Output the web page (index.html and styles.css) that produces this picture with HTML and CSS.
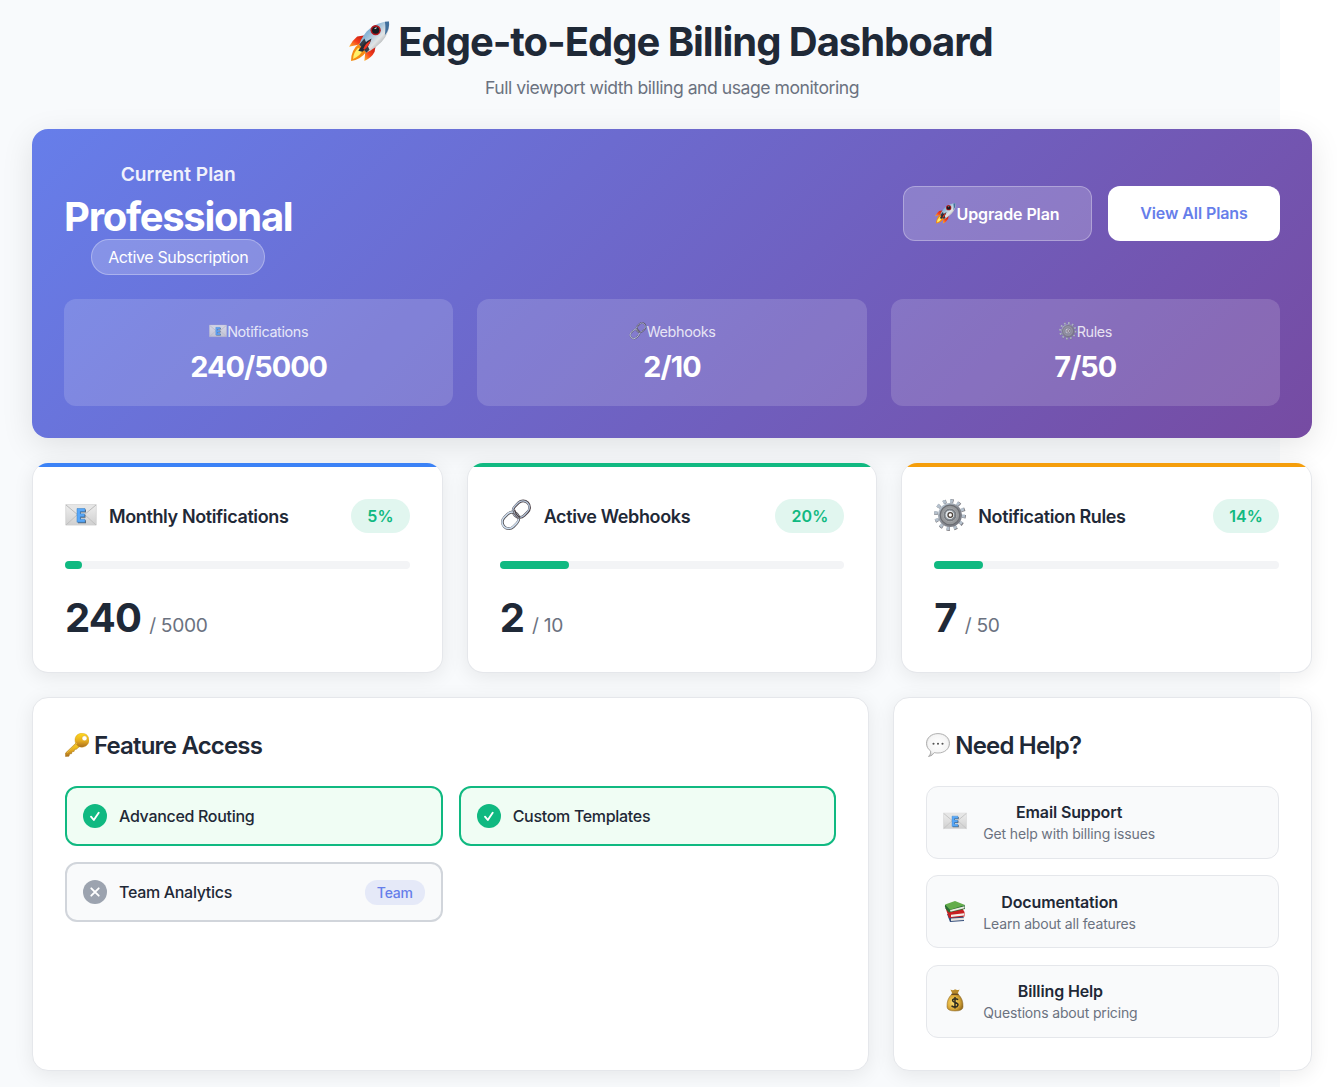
FILE: index.html
```html
<!DOCTYPE html>
<html lang="en">
<head>
<meta charset="utf-8">
<title>Edge-to-Edge Billing Dashboard</title>
<link rel="stylesheet" href="styles.css">
</head>
<body>
<svg class="sprite" aria-hidden="true">
  <defs>
    <linearGradient id="steel" x1="0" y1="0" x2="1" y2="1"><stop offset="0" stop-color="#4c88bd"/><stop offset=".35" stop-color="#8fb9d8"/><stop offset=".6" stop-color="#e2e4e5"/><stop offset="1" stop-color="#55585c"/></linearGradient>
    <linearGradient id="fin" x1="0" y1="1" x2="1" y2="0"><stop offset="0" stop-color="#ffb52b"/><stop offset=".45" stop-color="#f5401c"/><stop offset="1" stop-color="#bd1210"/></linearGradient>
    <linearGradient id="paper" x1="0" y1="0" x2="0" y2="1"><stop offset="0" stop-color="#eeeeee"/><stop offset="1" stop-color="#d0d0d0"/></linearGradient>
    <linearGradient id="metal" x1="0" y1="0" x2="1" y2="1"><stop offset="0" stop-color="#c5d4e2"/><stop offset=".5" stop-color="#888c94"/><stop offset="1" stop-color="#70717a"/></linearGradient>
    <linearGradient id="gold" x1="0" y1="0" x2="0" y2="1"><stop offset="0" stop-color="#ffd91f"/><stop offset=".55" stop-color="#e5ac20"/><stop offset="1" stop-color="#a96d20"/></linearGradient>
    <radialGradient id="bubble" cx=".5" cy=".45" r=".6"><stop offset="0" stop-color="#ffffff"/><stop offset=".7" stop-color="#f5f5f5"/><stop offset="1" stop-color="#bdbdbd"/></radialGradient>
    <radialGradient id="sack" cx=".4" cy=".5" r=".65"><stop offset="0" stop-color="#ffe173"/><stop offset=".6" stop-color="#dba938"/><stop offset="1" stop-color="#8c641b"/></radialGradient>
  </defs>
  <symbol id="rocket" viewBox="0 0 40 40">
    <path d="M16 14 8 15Q3 19 0 25l10-2 5-4z" fill="url(#fin)"/>
    <path d="M26 24l-1 6Q22 36 15 39l1-10 5-5z" fill="url(#fin)"/>
    <path d="M10 22Q2 28 2 39q9-1 15-9l-4-6z" fill="#f48c13"/>
    <path d="M9 26Q4 31 4 37q7-3 9-8z" fill="#fff06a"/>
    <path d="M10 23C14 10 25 1 39 .5 41 14 29 25 17 31z" fill="url(#steel)"/>
    <path d="M35 .8 39 .5Q40 8 35 14q1-8 0-13.200z" fill="#42709d"/>
    <path d="M15 17 10 23l7 8 3-3z" fill="#353c45"/>
    <path d="M9 29Q14 21 22 17q-2 8-9 13z" fill="#262932"/>
    <path d="M14 27Q16 22 21 19q-1 5-6 9z" fill="#f13420"/>
    <circle cx="26" cy="9" r="5" fill="#b3181e"/><circle cx="26" cy="9" r="3.500" fill="#151b21"/><path d="M25 7.500l2-1" stroke="#dce7ed" stroke-width="1"/>
  </symbol>
  <symbol id="email" viewBox="0 0 32 32">
    <path d="M.7 5.500h30.600v20.600H.7z" fill="url(#paper)" stroke="#cdcdcd" stroke-width=".6"/>
    <path d="M1 6l12 10Q16 18 19 16L31 6" fill="#e6e6e6" stroke="#b6b6b6" stroke-width=".9"/>
    <path d="M1 26l12-11M31 26 19 15" stroke="#bdbdbd" stroke-width=".9"/>
    <path d="M13 10.500h8v3h-5v2.300h4.500v3H16v2.400h5v3h-8z" fill="#5b6775"/>
    <path d="M12 9.500h8v3h-4.700v2.300h4.200v3h-4.200v2.400H20v3h-8z" fill="#58a8fa" stroke="#377dbd" stroke-width=".5"/>
  </symbol>
  <symbol id="link" viewBox="0 0 32 32">
    <g fill="none"><g transform="rotate(-45 21 10.500)"><rect x="12.500" y="4" width="18" height="13" rx="6.500" stroke="#4d4247" stroke-width="2.600"/><rect x="12.300" y="3.700" width="18" height="13" rx="6.500" stroke="#b4c5d9" stroke-width="1.300"/></g>
    <g transform="rotate(-45 11 21)"><rect x="1.500" y="14.500" width="18" height="13" rx="6.500" stroke="#555357" stroke-width="2.600"/><rect x="1.300" y="14.200" width="18" height="13" rx="6.500" stroke="#cfdeef" stroke-width="1.500"/></g>
    <path d="M14 11q1 5 5 8" stroke="#4d4247" stroke-width="2.600"/><path d="M13.500 11q1 5 5 8" stroke="#a9b4c1" stroke-width="1"/></g>
  </symbol>
  <symbol id="gear" viewBox="0 0 32 32">
    <circle cx="16" cy="16" r="14" fill="none" stroke="#77757a" stroke-width="3.800" stroke-dasharray="3.200 4.130"/>
    <circle cx="15.600" cy="15.600" r="13.700" fill="none" stroke="#b5c1cd" stroke-width="3.500" stroke-dasharray="3 4.173"/>
    <circle cx="16" cy="16" r="12" fill="url(#metal)"/><circle cx="16" cy="16" r="9.800" fill="#96989b" stroke="#6a6c71" stroke-width="1.200"/>
    <circle cx="16" cy="16" r="6.800" fill="#777a7f" stroke="#a4a7aa"/><circle cx="15.800" cy="15.800" r="4.800" fill="#e3e8ec" stroke="#7d868d"/><circle cx="16.300" cy="16" r="2.300" fill="#fff" stroke="#4a4039" stroke-width="1.300"/>
  </symbol>
  <symbol id="key" viewBox="0 0 24 24">
    <path d="M11.500 9.500.5 20v3.500l3.500-.3.600-2.200 2-.3.500-2 2-.3.600-2 1.700-.2 3.500-3z" fill="url(#gold)" stroke="#a97717" stroke-width=".5"/>
    <path fill-rule="evenodd" d="M17 .3C22 .3 24 4 24 7.500S21 14 17 14.200 10 11 10 7 13 .3 17 .3zm2.500 2.500a2.500 2.500 0 1 0 0 5 2.500 2.500 0 0 0 0-5z" fill="url(#gold)" stroke="#d29a12" stroke-width=".4"/><path d="M12 10 2 20" stroke="#e6b63b" stroke-width="1"/>
  </symbol>
  <symbol id="speech" viewBox="0 0 24 24">
    <path d="M12 .6C18.500.6 23.500 4.700 23.500 10.300S18.500 20 12 20q-2 0-3.800-.4Q6.500 23 2.500 23.600 5 21.500 4.700 18 .5 15.200.5 10.300C.5 4.700 5.500.6 12 .6z" fill="url(#bubble)" stroke="#a9a9a9" stroke-width=".9"/>
    <g fill="#555"><circle cx="7.500" cy="10.800" r="1.050"/><circle cx="12" cy="10.800" r="1.050"/><circle cx="16.500" cy="10.800" r="1.050"/></g>
  </symbol>
  <symbol id="books" viewBox="0 0 24 24">
    <path d="M4 15l3 8 14-1v-3L19 15z" fill="#334d7b"/><path d="M8 19.600l13-.8v2.300l-13 1z" fill="#e7e4df"/>
    <path d="M2.500 9 6 19l15.500-1.500V13L19 9z" fill="#c91f20"/><path d="M8 15.800l13-1.500v2.300L8 18z" fill="#f3eee7"/>
    <path d="M2 6Q1 9 6 13.500L22 10V6.200z" fill="#286c34"/><path d="M7 11 21.500 7.200v2L7.500 12.700z" fill="#eeeae2"/><path d="M2 5.500 12 2l10 4L7 10.800z" fill="#64ad4b"/>
  </symbol>
  <symbol id="money" viewBox="0 0 24 24">
    <path d="M7.500 1.500Q10 3 12 1.300q2 1.500 4.500.2L14.500 6h-5z" fill="#b98a2c"/>
    <path d="M9 6Q3.500 11 4 19q.3 4 8 4t8-4Q20.500 11 15 6z" fill="url(#sack)" stroke="#8b6420" stroke-width=".5"/><path d="M8.500 6.300h7" stroke="#68491f" stroke-width="1.300"/>
    <path d="M15.200 11.700Q12 9.700 9.800 11.500C8.300 15 15.500 14 15 17c-.8 3-4.800 2.500-6.500.8M12 9v11.500" fill="none" stroke="#302d20" stroke-width="1.500"/>
  </symbol>
</svg>
<div class="page">
 <main class="dashboard">
  <header class="heading">
    <h1 class="heading-title"><svg class="icon"><use href="#rocket"/></svg><span>Edge-to-Edge Billing Dashboard</span></h1>
    <p class="heading-sub">Full viewport width billing and usage monitoring</p>
  </header>
  <section class="plan">
    <div class="plan-top">
      <div class="plan-info"><h2 class="plan-label">Current Plan</h2><div class="plan-name">Professional</div><span class="plan-status">Active Subscription</span></div>
      <div class="plan-actions"><button class="btn btn-glass"><svg class="icon"><use href="#rocket"/></svg><span>Upgrade Plan</span></button><button class="btn btn-white">View All Plans</button></div>
    </div>
    <div class="stats">
      <div class="stat"><div class="stat-label"><svg class="icon"><use href="#email"/></svg><span>Notifications</span></div><div class="stat-value">240/5000</div></div>
      <div class="stat"><div class="stat-label"><svg class="icon"><use href="#link"/></svg><span>Webhooks</span></div><div class="stat-value">2/10</div></div>
      <div class="stat"><div class="stat-label"><svg class="icon"><use href="#gear"/></svg><span>Rules</span></div><div class="stat-value">7/50</div></div>
    </div>
  </section>
  <section class="usage">
    <article class="card usage-card blue">
      <div class="usage-head"><svg class="icon"><use href="#email"/></svg><h3 class="usage-title">Monthly Notifications</h3><span class="percent">5%</span></div>
      <div class="track"><div class="fill" style="width:4.8%"></div></div>
      <div class="amount"><strong class="amount-used">240</strong><span class="amount-max">/ 5000</span></div>
    </article>
    <article class="card usage-card green">
      <div class="usage-head"><svg class="icon"><use href="#link"/></svg><h3 class="usage-title">Active Webhooks</h3><span class="percent">20%</span></div>
      <div class="track"><div class="fill" style="width:20%"></div></div>
      <div class="amount"><strong class="amount-used">2</strong><span class="amount-max">/ 10</span></div>
    </article>
    <article class="card usage-card amber">
      <div class="usage-head"><svg class="icon"><use href="#gear"/></svg><h3 class="usage-title">Notification Rules</h3><span class="percent">14%</span></div>
      <div class="track"><div class="fill" style="width:14%"></div></div>
      <div class="amount"><strong class="amount-used">7</strong><span class="amount-max">/ 50</span></div>
    </article>
  </section>
  <section class="lower">
    <article class="card panel">
      <h2 class="panel-title"><svg class="icon"><use href="#key"/></svg><span>Feature Access</span></h2>
      <div class="features">
        <div class="feature on"><span class="mark"><svg viewBox="0 0 24 24"><path d="M8 12.700l2.800 3.300L15.700 8.700"/></svg></span><span class="feature-name">Advanced Routing</span></div>
        <div class="feature on"><span class="mark"><svg viewBox="0 0 24 24"><path d="M8 12.700l2.800 3.300L15.700 8.700"/></svg></span><span class="feature-name">Custom Templates</span></div>
        <div class="feature"><span class="mark"><svg viewBox="0 0 24 24"><path d="M8.300 8.300l7.400 7.400M15.700 8.300l-7.400 7.400"/></svg></span><span class="feature-name">Team Analytics</span><span class="tier">Team</span></div>
      </div>
    </article>
    <article class="card panel">
      <h2 class="panel-title"><svg class="icon"><use href="#speech"/></svg><span>Need Help?</span></h2>
      <div class="help">
        <div class="help-item"><svg class="icon"><use href="#email"/></svg><div class="help-text"><div class="help-name">Email Support</div><div class="help-note">Get help with billing issues</div></div></div>
        <div class="help-item"><svg class="icon"><use href="#books"/></svg><div class="help-text"><div class="help-name">Documentation</div><div class="help-note">Learn about all features</div></div></div>
        <div class="help-item"><svg class="icon"><use href="#money"/></svg><div class="help-text"><div class="help-name">Billing Help</div><div class="help-note">Questions about pricing</div></div></div>
      </div>
    </article>
  </section>
 </main>
</div>
</body>
</html>
```

FILE: styles.css
```css
* { box-sizing: border-box; margin: 0; padding: 0; }
html { background: #fff; }
body { font-family: Inter, "Liberation Sans", sans-serif; color: #1f2937; overflow: hidden; }
.sprite { position: absolute; width: 0; height: 0; }
.icon { display: block; flex: none; width: 24px; height: 24px; }
.page { width: 1280px; height: 1087px; padding-left: 32px; background: #f8fafc; }
.dashboard { width: 1280px; padding-top: 15px; }

.heading { height: 114px; text-align: center; }
.heading-title { display: flex; justify-content: center; align-items: center; gap: 8px; height: 52px; padding-right: 2px; font-size: 40px; font-weight: 700; letter-spacing: -1.040px; white-space: nowrap; }
.heading-title .icon { width: 41px; height: 41px; }
.heading-sub { margin-top: 8px; font-size: 17.600px; line-height: 26px; color: #6b7280; letter-spacing: -.470px; }

.plan { height: 309px; padding: 32px; border-radius: 16px; color: #fff; background: linear-gradient(135deg, #667eea 0%, #764ba2 100%); box-shadow: 0 8px 32px rgba(0,0,0,.1); }
.plan-top { display: flex; justify-content: space-between; align-items: center; height: 114px; margin-bottom: 24px; }
.plan-info { display: flex; flex-direction: column; align-items: center; }
.plan-label { font-size: 19.200px; font-weight: 600; line-height: 26px; opacity: .9; letter-spacing: -.050px; }
.plan-name { margin-top: 8px; font-size: 40px; font-weight: 700; line-height: 44px; letter-spacing: -1.280px; }
.plan-status { height: 36px; padding: 0 16px; border: 1px solid rgba(255,255,255,.3); border-radius: 20px; background: rgba(255,255,255,.2); font-size: 16px; line-height: 35px; letter-spacing: -.360px; }
.plan-actions { display: flex; gap: 16px; padding-bottom: 9px; }
.btn { display: flex; align-items: center; justify-content: center; height: 55px; border: 1px solid rgba(255,255,255,.3); border-radius: 12px; font: 600 16px Inter, sans-serif; letter-spacing: -.090px; white-space: nowrap; }
.btn-glass { width: 189px; background: rgba(255,255,255,.2); color: #fff; }
.btn-glass .icon { width: 21px; height: 21px; }
.btn-white { width: 172px; padding-bottom: 1px; background: #fff; color: #667eea; }
.stats { display: grid; grid-template-columns: repeat(3, 1fr); gap: 24px; }
.stat { height: 107px; padding-top: 22px; border-radius: 12px; background: rgba(255,255,255,.15); text-align: center; }
.stat-label { display: flex; align-items: center; justify-content: center; font-size: 14.400px; line-height: 22px; opacity: .8; letter-spacing: -.370px; }
.stat-label .icon { width: 18px; height: 18px; margin-top: -2px; }
.stat-value { margin-top: 6px; font-size: 28.800px; line-height: 36px; font-weight: 700; letter-spacing: -.950px; }

.card { overflow: hidden; border: 1px solid #e5e7eb; border-radius: 16px; background: #fff; box-shadow: 0 4px 20px rgba(0,0,0,.08); }
.usage { display: grid; grid-template-columns: repeat(3, 1fr); gap: 24px; margin-top: 25px; }
.usage-card { height: 210px; padding: 0 32px; border-top: 0; }
.usage-card::before { content: ""; display: block; height: 4px; margin: 0 -32px; background: var(--accent); }
.blue { --accent: #3b82f6; }
.green { --accent: #10b981; }
.amber { --accent: #f59e0b; }
.usage-head { display: flex; align-items: center; height: 34px; margin-top: 32px; }
.usage-head .icon { width: 32px; height: 32px; margin-top: -2px; }
.usage-title { margin-left: 12px; font-size: 18px; font-weight: 600; letter-spacing: -.380px; }
.percent { margin-left: auto; padding: 0 16px; border-radius: 20px; background: rgba(16,185,129,.125); color: #10b981; font-size: 16px; line-height: 34px; font-weight: 600; letter-spacing: .080px; }
.track { height: 8px; margin-top: 28px; border-radius: 4px; background: #f3f4f6; }
.fill { height: 8px; border-radius: 4px; background: #10b981; }
.amount { display: flex; align-items: baseline; gap: 8px; margin-top: 24px; line-height: 50px; }
.amount-used { font-size: 40px; letter-spacing: -.800px; }
.amount-max { font-size: 19.200px; letter-spacing: -.350px; color: #6b7280; }

.lower { display: grid; grid-template-columns: 2fr 1fr; gap: 24px; margin-top: 24px; }
.panel { height: 374px; padding: 31px 32px; }
.panel-title { display: flex; align-items: center; gap: 5px; height: 32px; font-size: 24px; font-weight: 600; letter-spacing: -.820px; }
.features { display: grid; grid-template-columns: 1fr 1fr; gap: 16px; margin-top: 25px; }
.feature { display: flex; align-items: center; gap: 12px; height: 60px; padding: 0 16px; border: 2px solid #d1d5db; border-radius: 12px; background: #f9fafb; }
.feature.on { border-color: #10b981; background: #f0fdf4; }
.mark { width: 24px; height: 24px; border-radius: 50%; background: #9ca3af; }
.on .mark { background: #10b981; }
.mark svg { display: block; fill: none; stroke: #fff; stroke-width: 1.900; stroke-linecap: round; stroke-linejoin: round; }
.feature-name { font-size: 16px; font-weight: 500; letter-spacing: -.310px; }
.tier { margin-left: auto; padding: 0 12px; border-radius: 12px; background: rgba(102,126,234,.13); color: #667eea; font-size: 14px; line-height: 25px; font-weight: 500; letter-spacing: -.250px; }
.help { display: grid; gap: 16.400px; margin-top: 24.600px; }
.help-item { display: flex; align-items: center; gap: 16px; height: 73.200px; padding: 0 16px; border: 1px solid #e5e7eb; border-radius: 12px; background: #f9fafb; }
.help-item .icon { margin-top: -2px; }
.help-text { text-align: center; }
.help-name { font-size: 16px; line-height: 24px; font-weight: 600; letter-spacing: -.130px; }
.help-note { font-size: 14px; line-height: 20px; color: #6b7280; letter-spacing: -.160px; }
```
